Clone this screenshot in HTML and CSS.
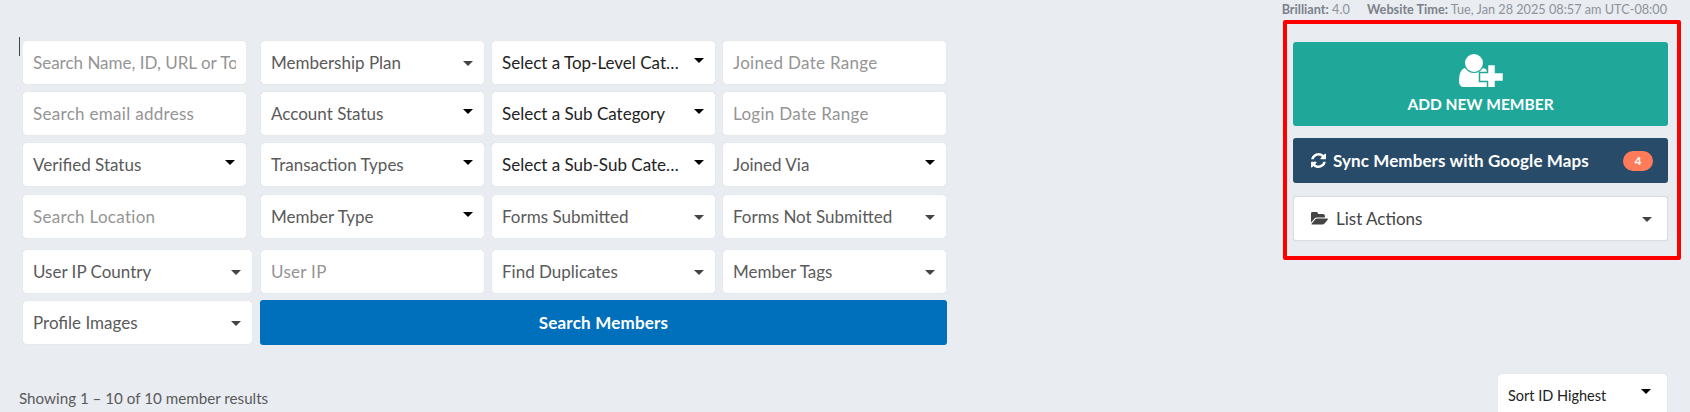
FILE: index.html
```html
<!DOCTYPE html>
<html lang="en">
<head>
    <meta charset="UTF-8">
    <title>Members</title>
    <link rel="stylesheet" href="styles.css">
</head>
<body>
    <div class="topline"><b>Brilliant:</b> 4.0 <b class="time-label">Website Time:</b> Tue, Jan 28 2025 08:57 am UTC-08:00</div>

    <div class="main">
        <span class="text-cursor"></span>

        <!-- Search filters -->
        <form class="filters">
            <div class="row">
                <input class="field tight" placeholder="Search Name, ID, URL or Token">
                <div class="select low">Membership Plan</div>
                <div class="select dark">Select a Top-Level Category</div>
                <input class="field" placeholder="Joined Date Range">
            </div>
            <div class="row">
                <input class="field" placeholder="Search email address">
                <div class="select">Account Status</div>
                <div class="select dark">Select a Sub Category</div>
                <input class="field" placeholder="Login Date Range">
            </div>
            <div class="row gap-9">
                <div class="select">Verified Status</div>
                <div class="select">Transaction Types</div>
                <div class="select dark">Select a Sub-Sub Category</div>
                <div class="select">Joined Via</div>
            </div>
            <div class="row gap-12">
                <input class="field" placeholder="Search Location">
                <div class="select">Member Type</div>
                <div class="select low">Forms Submitted</div>
                <div class="select low">Forms Not Submitted</div>
            </div>
            <div class="row gap-7 wide-first">
                <div class="select low">User IP Country</div>
                <input class="field" placeholder="User IP">
                <div class="select low">Find Duplicates</div>
                <div class="select low">Member Tags</div>
            </div>
            <div class="row last-row wide-first">
                <div class="select low">Profile Images</div>
                <button class="btn-search" type="button">Search Members</button>
            </div>
        </form>

        <!-- Actions -->
        <div class="actions">
            <button class="btn-add" type="button">
                <svg class="icon-add" viewBox="0 0 44 33" width="44" height="33">
                    <circle cx="15" cy="9" r="9" fill="#fff"/>
                    <path d="M0 27C0 20 2 15 6 14c2 3 5 5 9 5s7-2 9-5c4 1 6 4 6 8v11H5c-3 0-5-2-5-6z" fill="#fff"/>
                    <path d="M28.500 10.500h8v8h8v9h-8v7h-8v-7h-8v-9h8z" fill="#fff" stroke="#1fa89a" stroke-width="1.500"/>
                </svg>
                <span>ADD NEW MEMBER</span>
            </button>
            <button class="btn-sync" type="button">
                <svg viewBox="128 128 1536 1536" width="15" height="15">
                    <path d="M1639 1056q0 5-1 7-64 268-268 434.500t-478 166.500q-146 0-282.500-55t-243.500-157l-129 129q-19 19-45 19t-45-19-19-45v-448q0-26 19-45t45-19h448q26 0 45 19t19 45-19 45l-137 137q71 66 161 102t187 36q134 0 250-65t186-179q11-17 53-117 8-23 30-23h192q13 0 22.500 9.500t9.500 22.500zm25-800v448q0 26-19 45t-45 19h-448q-26 0-45-19t-19-45 19-45l138-138q-148-137-349-137-134 0-250 65t-186 179q-11 17-53 117-8 23-30 23h-199q-13 0-22.500-9.500t-9.500-22.500v-7q65-268 270-434.500t480-166.500q146 0 284 55.500t245 156.500l130-129q19-19 45-19t45 19 19 45z" fill="#fff"/>
                </svg>
                <span>Sync Members with Google Maps</span>
                <span class="badge">4</span>
            </button>
            <div class="select list-actions">
                <svg viewBox="-33 198 1878 1344" width="17" height="13">
                    <path d="M1845 931q0 35-53 93l-336 396q-43 51-120.500 86.500t-143.500 35.500h-1088q-34 0-60.500-13t-26.500-43q0-35 53-93l336-396q43-51 120.500-86.500t143.500-35.500h1088q34 0 60.500 13t26.500 43zm-343-344v160h-832q-94 0-197 47.500t-164 119.500l-337 396-5 6q0-4-.500-12.500t-.500-12.500v-960q0-92 66-158t158-66h320q92 0 158 66t66 158v32h544q92 0 158 66t66 158z" fill="#444"/>
                </svg>
                <span>List Actions</span>
            </div>
        </div>
    </div>

    <div class="results">
        <div class="results-count">Showing 1 – 10 of 10 member results</div>
        <div class="select sort dark">Sort ID Highest</div>
    </div>
</body>
</html>
```

FILE: styles.css
```css
* { box-sizing: border-box; }
html, body { height: 412px; overflow: hidden; }
body { font-family: 'Lato', sans-serif; margin: 0; background: #e9ecf1; color: #5a5a5a; font-size: 17px; position: relative; }

.topline { height: 20px; padding-right: 23px; text-align: right; font-size: 12.7px; line-height: 18px; color: #8d929b; }
.topline b { color: #7b818a; }
.time-label { margin-left: 14px; }

.main { display: flex; justify-content: space-between; align-items: flex-start; padding-right: 9px; position: relative; }
.text-cursor { position: absolute; left: 19px; top: 17px; width: 1px; height: 19px; background: #444; }

.filters { margin: 21px 0 0 23px; width: 924px; }
.row { display: flex; margin-bottom: 8px; }
.row > :first-child { margin-right: 15px; }
.row > :nth-child(n+2) { margin-right: 8px; }
.row > :last-child { margin-right: 0; }
.gap-9 { margin-bottom: 9px; }
.gap-12 { margin-bottom: 12px; }
.gap-7 { margin-bottom: 7px; }
.last-row { align-items: center; margin-bottom: 0; height: 45px; }

.field, .select { width: 223px; height: 43px; flex: none; background: #fff; border: 1px solid #fff; border-radius: 3px; box-shadow: 0 0 1px rgba(0,0,0,0.15); font-family: inherit; font-size: 17px; color: #5a5a5a; }
.field { padding: 0 9px; outline: none; }
.field::placeholder { color: #949494; opacity: 1; letter-spacing: 0.3px; }
.field.tight::placeholder { letter-spacing: 0; }

.select { display: block; position: relative; padding: 0 33px 0 9px; line-height: 41px; white-space: nowrap; overflow: hidden; text-overflow: ellipsis; }
.select::after { content: ""; position: absolute; right: 10px; top: 16px; border-left: 5px solid transparent; border-right: 5px solid transparent; border-top: 5px solid #000; }
.select.low::after { top: 19px; border-top-color: #444; }
.select.dark { color: #222; }

.wide-first > :first-child { width: 229px; margin-right: 9px; }
.last-row.wide-first > :first-child { margin-right: 8px; }

.btn-search { width: 687px; height: 45px; background: #0070bc; color: #fff; border: none; border-radius: 3px; font-family: inherit; font-size: 17px; font-weight: 700; letter-spacing: 0.2px; }

.actions { width: 398px; height: 240px; border: 4px solid #f00; border-radius: 2px; padding: 18px 9px 15px 6px; }
.btn-add { display: flex; flex-direction: column; align-items: center; width: 100%; height: 84px; padding: 12px 0 0; background: #1fa89a; color: #fff; border: none; border-radius: 3px; font-family: inherit; font-size: 15.500px; font-weight: 700; line-height: 20px; }
.icon-add { margin-bottom: 7px; }
.btn-sync { display: flex; align-items: center; width: 100%; height: 45px; margin-top: 12px; padding: 0 15px 0 18px; background: #284b69; color: #fff; border: none; border-radius: 3px; font-family: inherit; font-size: 17px; font-weight: 700; letter-spacing: 0.1px; }
.btn-sync svg { margin-right: 7px; }
.badge { margin-left: auto; width: 30px; height: 20px; border-radius: 10px; background: #ff7b5a; font-size: 12px; line-height: 20px; }

.list-actions { display: flex; align-items: center; width: 100%; height: 45px; margin-top: 13px; padding-left: 17px; border-color: #dcdfe3; color: #444; }
.list-actions svg { margin-right: 8px; }
.list-actions::after { top: 20px; border-top-color: #444; right: 15px; }

.results { display: flex; justify-content: space-between; align-items: flex-start; margin-top: 29px; padding: 0 23px 0 19px; }
.results-count { margin-top: 14px; font-size: 15.200px; line-height: 20px; }
.sort { width: 169px; font-size: 14.500px; }
.sort::after { top: 14px; right: 15px; }
```
